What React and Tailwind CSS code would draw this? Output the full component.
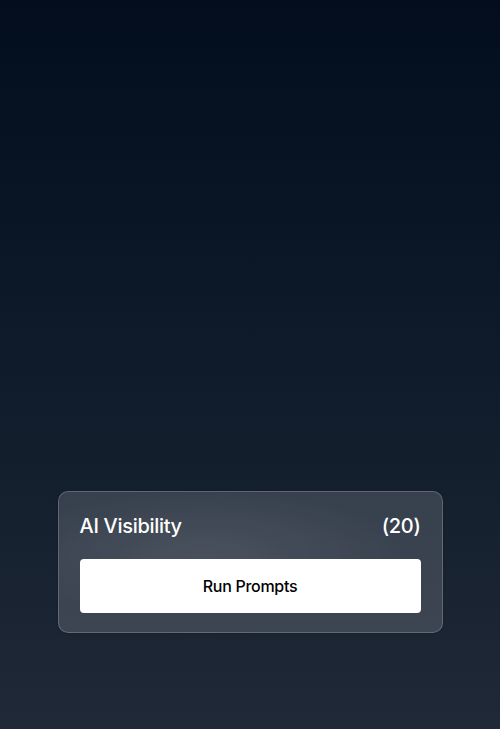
export default function App() {
  return (
    <div
      className="min-h-screen w-full flex items-end justify-center pb-[96px] bg-gradient-to-b from-[#030d1e] to-[#1f2937]"
      style={{ fontFamily: 'Inter, "Noto Sans", sans-serif' }}
    >
      <div className="w-[385px] rounded-[10px] border border-white/20 bg-white/15 bg-[radial-gradient(ellipse_at_38%_45%,rgba(255,255,255,0.08),rgba(255,255,255,0)_60%)] shadow-sm px-[21px] pt-[20px] pb-[19px]">
        <div className="flex items-center justify-between h-[28px] text-white text-[20px] font-medium leading-7 tracking-[-0.3px]">
          <span>AI Visibility</span>
          <span>(20)</span>
        </div>
        <button className="mt-[19px] w-full h-[54px] rounded-[4px] bg-white text-black text-[16px] font-medium tracking-[-0.3px] flex items-center justify-center">
          Run Prompts
        </button>
      </div>
    </div>
  );
}
